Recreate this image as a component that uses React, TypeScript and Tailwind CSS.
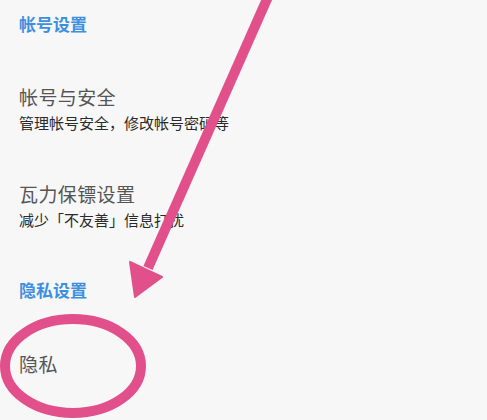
const font = { fontFamily: '"Noto Sans CJK SC", "Noto Sans", sans-serif' };

const SectionHeader = ({ label, className }: { label: string; className?: string }) => (
  <div className={`text-[17px] leading-[24px] font-bold text-[#3d8fe0] ${className ?? ""}`}>{label}</div>
);

const Item = ({ title, desc, className }: { title: string; desc?: string; className?: string }) => (
  <div className={className}>
    <div className="text-[19px] leading-[26px] tracking-[0.4px] text-[#555555]">{title}</div>
    {desc && <div className="mt-[2px] text-[15px] leading-[22px] text-[#2a2a2a]">{desc}</div>}
  </div>
);

export default function App() {
  return (
    <div className="relative h-[420px] w-[487px] overflow-hidden bg-[#f7f7f7]" style={font}>
      <div className="flex flex-col px-[19px] pt-[12px]">
        <SectionHeader label="帐号设置" />
        <Item className="mt-[48px]" title="帐号与安全" desc="管理帐号安全，修改帐号密码等" />
        <Item className="mt-[47px]" title="瓦力保镖设置" desc="减少「不友善」信息打扰" />
        <SectionHeader className="mt-[47px]" label="隐私设置" />
        <Item className="mt-[49px]" title="隐私" />
      </div>

      {/* annotation overlay */}
      <svg className="pointer-events-none absolute inset-0" width="487" height="420" viewBox="0 0 487 420">
        <line x1="271" y1="-10" x2="148" y2="268" stroke="#e2508b" strokeWidth="10" />
        <polygon points="130,262 162,277 135,297" fill="#e2508b" stroke="#e2508b" strokeWidth="2" strokeLinejoin="round" />
        <ellipse cx="73" cy="366" rx="68" ry="47" fill="none" stroke="#e2508b" strokeWidth="10" />
      </svg>
    </div>
  );
}
